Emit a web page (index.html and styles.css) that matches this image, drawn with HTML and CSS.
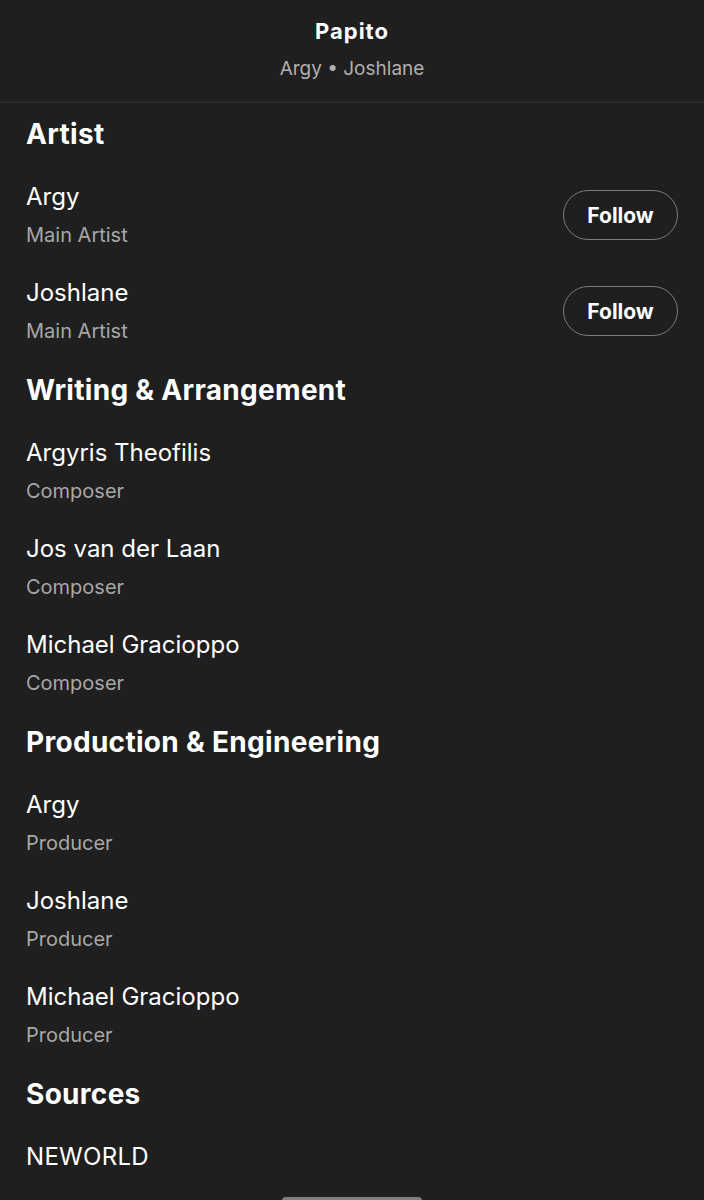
FILE: index.html
```html
<!DOCTYPE html>
<html lang="en">
<head>
    <meta charset="UTF-8">
    <meta name="viewport" content="width=device-width, initial-scale=1.0">
    <title>Papito - Credits</title>
    <link rel="stylesheet" href="styles.css">
</head>
<body>
    <header class="top-bar">
        <div class="track-title">Papito</div>
        <div class="track-artists">Argy &bull; Joshlane</div>
    </header>

    <main class="credits">
        <section class="credit-section">
            <h2>Artist</h2>
            <div class="credit-row">
                <div class="credit-info">
                    <div class="credit-name">Argy</div>
                    <div class="credit-role">Main Artist</div>
                </div>
                <button class="follow-button">Follow</button>
            </div>
            <div class="credit-row">
                <div class="credit-info">
                    <div class="credit-name">Joshlane</div>
                    <div class="credit-role">Main Artist</div>
                </div>
                <button class="follow-button">Follow</button>
            </div>
        </section>

        <section class="credit-section">
            <h2>Writing &amp; Arrangement</h2>
            <div class="credit-row">
                <div class="credit-info">
                    <div class="credit-name">Argyris Theofilis</div>
                    <div class="credit-role">Composer</div>
                </div>
            </div>
            <div class="credit-row">
                <div class="credit-info">
                    <div class="credit-name">Jos van der Laan</div>
                    <div class="credit-role">Composer</div>
                </div>
            </div>
            <div class="credit-row">
                <div class="credit-info">
                    <div class="credit-name">Michael Gracioppo</div>
                    <div class="credit-role">Composer</div>
                </div>
            </div>
        </section>

        <section class="credit-section">
            <h2>Production &amp; Engineering</h2>
            <div class="credit-row">
                <div class="credit-info">
                    <div class="credit-name">Argy</div>
                    <div class="credit-role">Producer</div>
                </div>
            </div>
            <div class="credit-row">
                <div class="credit-info">
                    <div class="credit-name">Joshlane</div>
                    <div class="credit-role">Producer</div>
                </div>
            </div>
            <div class="credit-row">
                <div class="credit-info">
                    <div class="credit-name">Michael Gracioppo</div>
                    <div class="credit-role">Producer</div>
                </div>
            </div>
        </section>

        <section class="credit-section">
            <h2>Sources</h2>
            <div class="credit-row">
                <div class="credit-info">
                    <div class="credit-name source-name">NEWORLD</div>
                </div>
            </div>
        </section>
    </main>

    <div class="home-indicator"></div>
</body>
</html>
```

FILE: styles.css
```css
/* General Styles */
body {
    font-family: 'Inter', 'Liberation Sans', sans-serif;
    background-color: #1f1f1f;
    margin: 0;
    padding: 0;
    color: #fff;
}

/* Header */
.top-bar {
    height: 103px;
    box-sizing: border-box;
    padding-top: 17px;
    text-align: center;
    border-bottom: 2px solid #2a2a2a;
}

.track-title {
    font-size: 22px;
    font-weight: 700;
    line-height: 28px;
    letter-spacing: 1px;
}

.track-artists {
    font-size: 19px;
    line-height: 26px;
    margin-top: 11px;
    color: #b0b0b0;
}

/* Credit Sections */
.credits {
    padding: 0 26px;
}

.credit-section h2 {
    font-size: 28px;
    font-weight: 700;
    line-height: 36px;
    margin: 13px 0 15px;
    letter-spacing: 0.3px;
}

.credit-row {
    display: flex;
    justify-content: space-between;
    align-items: center;
    padding: 15px 0;
}

.credit-name {
    font-size: 24px;
    line-height: 30px;
}

.credit-role {
    font-size: 20px;
    line-height: 26px;
    margin-top: 10px;
    color: #a7a7a7;
}

.source-name {
    letter-spacing: 0.3px;
}

/* Follow Button */
.follow-button {
    width: 115px;
    height: 50px;
    border: 1.5px solid #7c7c7c;
    border-radius: 25px;
    background-color: transparent;
    color: #fff;
    font-family: inherit;
    font-size: 21px;
    font-weight: 700;
    cursor: pointer;
}

/* Home Indicator */
.home-indicator {
    width: 140px;
    height: 8px;
    margin: 10px auto 0;
    border-radius: 4px;
    background-color: #808080;
}
```
